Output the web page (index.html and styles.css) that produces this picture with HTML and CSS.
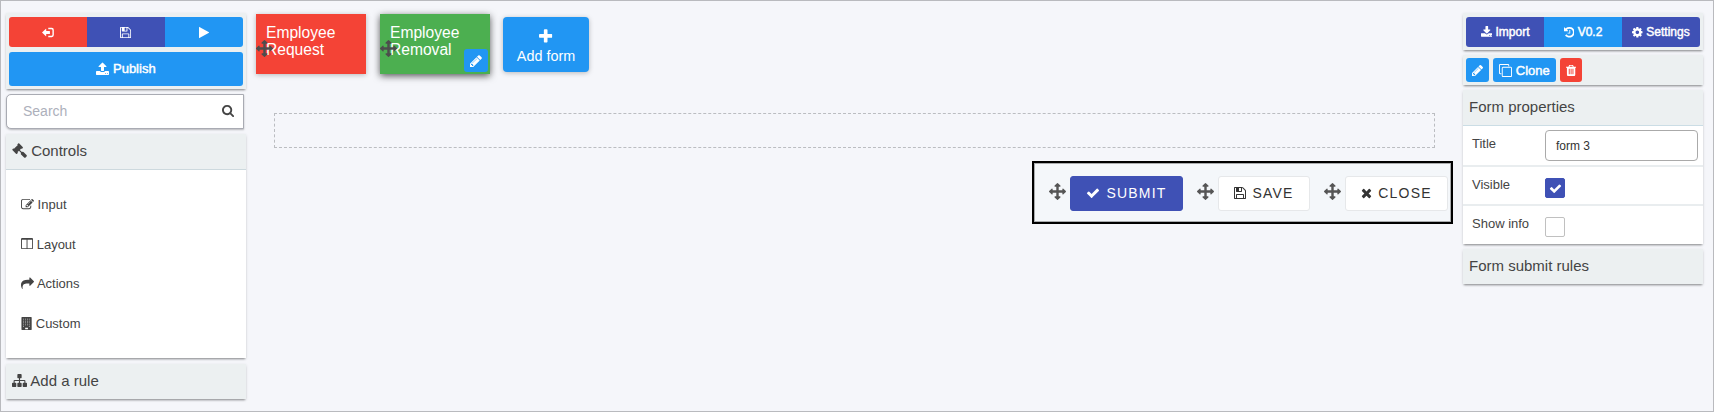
FILE: index.html
```html
<!DOCTYPE html>
<html lang="en">
<head>
<meta charset="utf-8">
<title>Form designer</title>
<link rel="stylesheet" href="styles.css">
</head>
<body>
<svg class="sprite" aria-hidden="true">
<symbol id="arrows" viewBox="0 0 1792 1792"><path d="M1792 896q0 26-19 45l-256 256q-19 19-45 19t-45-19-19-45v-128h-384v384h128q26 0 45 19t19 45-19 45l-256 256q-19 19-45 19t-45-19l-256-256q-19-19-19-45t19-45 45-19h128v-384h-384v128q0 26-19 45t-45 19-45-19l-256-256q-19-19-19-45t19-45l256-256q19-19 45-19t45 19 19 45v128h384v-384h-128q-26 0-45-19t-19-45 19-45l256-256q19-19 45-19t45 19l256 256q19 19 19 45t-19 45-45 19h-128v384h384v-128q0-26 19-45t45-19 45 19l256 256q19 19 19 45z"/></symbol>
<symbol id="check" viewBox="0 0 1792 1792"><path d="M1671 566q0 40-28 68l-724 724-136 136q-28 28-68 28t-68-28l-136-136-362-362q-28-28-28-68t28-68l136-136q28-28 68-28t68 28l294 295 656-657q28-28 68-28t68 28l136 136q28 28 28 68z"/></symbol>
<symbol id="times" viewBox="192 0 1408 1792"><path d="M1490 1322q0 40-28 68l-136 136q-28 28-68 28t-68-28l-294-294-294 294q-28 28-68 28t-68-28l-136-136q-28-28-28-68t28-68l294-294-294-294q-28-28-28-68t28-68l136-136q28-28 68-28t68 28l294 294 294-294q28-28 68-28t68 28l136 136q28 28 28 68t-28 68l-294 294 294 294q28 28 28 68z"/></symbol>
<symbol id="search" viewBox="64 0 1664 1792"><path d="M1216 832q0-185-131.500-316.500t-316.500-131.500-316.500 131.500-131.500 316.500 131.500 316.500 316.500 131.500 316.500-131.500 131.500-316.500zm512 832q0 52-38 90t-90 38q-54 0-90-38l-343-342q-179 124-399 124-143 0-273.500-55.500t-225-150-150-225-55.500-273.500 55.500-273.500 150-225 225-150 273.500-55.500 273.500 55.500 225 150 150 225 55.500 273.500q0 220-124 399l343 343q37 37 37 90z"/></symbol>
<symbol id="floppy" viewBox="128 0 1536 1792"><path d="M512 1536h768v-384h-768v384zm896 0h128v-896q0-14-10-38.500t-20-34.500l-281-281q-10-10-34-20t-39-10v416q0 40-28 68t-68 28h-576q-40 0-68-28t-28-68v-416h-128v1280h128v-416q0-40 28-68t68-28h832q40 0 68 28t28 68v416zm-384-928v-320q0-13-9.500-22.500t-22.500-9.500h-192q-13 0-22.500 9.500t-9.500 22.500v320q0 13 9.500 22.500t22.500 9.500h192q13 0 22.500-9.500t9.500-22.500zm640 32v928q0 40-28 68t-68 28h-1344q-40 0-68-28t-28-68v-1344q0-40 28-68t68-28h928q40 0 88 20t76 48l280 280q28 28 48 76t20 88z"/></symbol>
<symbol id="plus" viewBox="192 0 1408 1792"><path d="M1600 736v192q0 40-28 68t-68 28h-416v416q0 40-28 68t-68 28h-192q-40 0-68-28t-28-68v-416h-416q-40 0-68-28t-28-68v-192q0-40 28-68t68-28h416v-416q0-40 28-68t68-28h192q40 0 68 28t28 68v416h416q40 0 68 28t28 68z"/></symbol>
<symbol id="pencil" viewBox="128 0 1536 1792"><path d="M491 1536l91-91-235-235-91 91v107h128v128h107zm523-928q0-22-22-22-10 0-17 7l-542 542q-7 7-7 17 0 22 22 22 10 0 17-7l542-542q7-7 7-17zm-54-192l416 416-832 832h-416v-416zm683 96q0 53-37 90l-166 166-416-416 166-165q36-38 90-38 53 0 91 38l235 234q37 39 37 91z"/></symbol>
<symbol id="cog" viewBox="128 0 1536 1792"><path d="M1152 896q0-106-75-181t-181-75-181 75-75 181 75 181 181 75 181-75 75-181zm512-109v222q0 12-8 23t-20 13l-185 28q-19 54-39 91 35 50 107 138 10 12 10 25t-9 23q-27 37-99 108t-94 71q-12 0-26-9l-138-108q-44 23-91 38-16 136-29 186-7 28-36 28h-222q-14 0-24.500-8.500t-11.500-21.500l-28-184q-49-16-90-37l-141 107q-10 9-25 9-14 0-25-11-126-114-165-168-7-10-7-23 0-12 8-23 15-21 51-66.500t54-70.500q-27-50-41-99l-183-27q-13-2-21-12.500t-8-23.500v-222q0-12 8-23t19-13l186-28q14-46 39-92-40-57-107-138-10-12-10-24 0-10 9-23 26-36 98.500-107.500t94.500-71.500q13 0 26 10l138 107q44-23 91-38 16-136 29-186 7-28 36-28h222q14 0 24.500 8.500t11.500 21.500l28 184q49 16 90 37l142-107q9-9 24-9 13 0 25 10 129 119 165 170 7 8 7 22 0 12-8 23-15 21-51 66.500t-54 70.500q26 50 41 98l183 28q13 2 21 12.500t8 23.500z"/></symbol>
<symbol id="download" viewBox="64 0 1664 1792"><path d="M1344 1344q0-26-19-45t-45-19-45 19-19 45 19 45 45 19 45-19 19-45zm256 0q0-26-19-45t-45-19-45 19-19 45 19 45 45 19 45-19 19-45zm128-224v320q0 40-28 68t-68 28h-1472q-40 0-68-28t-28-68v-320q0-40 28-68t68-28h465l135 136q58 56 136 56t136-56l136-136h464q40 0 68 28t28 68zm-325-569q17 41-14 70l-448 448q-18 19-45 19t-45-19l-448-448q-31-29-14-70 17-39 59-39h256v-448q0-26 19-45t45-19h256q26 0 45 19t19 45v448h256q42 0 59 39z"/></symbol>
<symbol id="upload" viewBox="64 0 1664 1792"><path d="M1344 1472q0-26-19-45t-45-19-45 19-19 45 19 45 45 19 45-19 19-45zm256 0q0-26-19-45t-45-19-45 19-19 45 19 45 45 19 45-19 19-45zm128-224v320q0 40-28 68t-68 28h-1472q-40 0-68-28t-28-68v-320q0-40 28-68t68-28h427q21 56 70.500 92t110.500 36h256q61 0 110.500-36t70.500-92h427q40 0 68 28t28 68zm-325-648q-17 40-59 40h-256v448q0 26-19 45t-45 19h-256q-26 0-45-19t-19-45v-448h-256q-42 0-59-40-17-39 14-69l448-448q18-19 45-19t45 19l448 448q31 30 14 69z"/></symbol>
<symbol id="history" viewBox="128 0 1536 1792"><path d="M1664 896q0 156-61 298t-164 245-245 164-298 61q-172 0-327-72.500t-264-204.500q-7-10-6.500-22.500t8.500-20.500l137-138q10-9 25-9 16 2 23 12 73 95 179 147t225 52q104 0 198.500-40.500t163.500-109.500 109.500-163.500 40.500-198.500-40.500-198.500-109.500-163.500-163.500-109.500-198.500-40.500q-98 0-188 35.500t-160 101.500l137 138q31 30 14 69-17 40-59 40h-448q-26 0-45-19t-19-45v-448q0-42 40-59 39-17 69 14l130 129q107-101 244.500-156.500t284.500-55.500q156 0 298 61t245 164 164 245 61 298zm-640-288v448q0 14-9 23t-23 9h-320q-14 0-23-9t-9-23v-64q0-14 9-23t23-9h224v-352q0-14 9-23t23-9h64q14 0 23 9t9 23z"/></symbol>
<symbol id="share" viewBox="0 0 1792 1792"><path d="M1792 640q0 26-19 45l-512 512q-19 19-45 19t-45-19-19-45v-256h-224q-98 0-175.500 6t-154 21.500-133 42.500-105.500 69.500-80 101-48.500 138.500-17.500 181q0 55 5 123 0 6 2.500 23.500t2.500 26.500q0 15-8.500 25t-23.500 10q-16 0-28-17-7-9-13-22t-13.500-30-10.500-24q-127-285-127-451 0-199 53-333 162-403 875-403h224v-256q0-26 19-45t45-19 45 19l512 512q19 19 19 45z"/></symbol>
<symbol id="sitemap" viewBox="0 0 1792 1792"><path d="M1792 1248v320q0 40-28 68t-68 28h-320q-40 0-68-28t-28-68v-320q0-40 28-68t68-28h96v-192h-512v192h96q40 0 68 28t28 68v320q0 40-28 68t-68 28h-320q-40 0-68-28t-28-68v-320q0-40 28-68t68-28h96v-192h-512v192h96q40 0 68 28t28 68v320q0 40-28 68t-68 28h-320q-40 0-68-28t-28-68v-320q0-40 28-68t68-28h96v-192q0-52 38-90t90-38h512v-192h-96q-40 0-68-28t-28-68v-320q0-40 28-68t68-28h320q40 0 68 28t28 68v320q0 40-28 68t-68 28h-96v192h512q52 0 90 38t38 90v192h96q40 0 68 28t28 68z"/></symbol>
<symbol id="gavel" viewBox="0 0 1792 1792"><path d="M1771 1536q0 53-37 90l-107 108q-39 37-91 37-53 0-90-37l-363-364q-38-36-38-90 0-53 43-96l-256-256-126 126q-14 14-34 14t-34-14q2 2 12.500 12t12.500 13 10 11.500 10 13.500 6 13.500 5.500 16.500 1.500 18q0 38-28 68-3 3-16.500 18t-19 20.500-18.500 16.500-22 15.500-22 9-26 4.500q-40 0-68-28l-408-408q-28-28-28-68 0-13 4.500-26t9-22 15.500-22 16.500-18.500 20.500-19 18-16.500q30-28 68-28 10 0 18 1.500t16.500 5.500 13.500 6 13.500 10 11.500 10 13 12.500 12 12.500q-14-14-14-34t14-34l348-348q14-14 34-14t34 14q-2-2-12.500-12t-12.500-13-10-11.500-10-13.500-6-13.500-5.500-16.500-1.500-18q0-38 28-68 3-3 16.500-18t19-20.500 18.500-16.500 22-15.500 22-9 26-4.500q40 0 68 28l408 408q28 28 28 68 0 13-4.500 26t-9 22-15.500 22-16.500 18.500-20.500 19-18 16.500q-30 28-68 28-10 0-18-1.500t-16.500-5.500-13.500-6-13.500-10-11.500-10-13-12.500-12-12.500q14 14 14 34t-14 34l-126 126 256 256q43-43 96-43 52 0 91 37l363 363q37 39 37 91z"/></symbol>
<symbol id="edit" viewBox="0 0 1792 1792"><path d="M888 1184l116-116-152-152-116 116v56h96v96h56zm440-720q-16-16-33 1l-350 350q-17 17-1 33t33-1l350-350q17-17 1-33zm80 594v190q0 119-84.500 203.500t-203.500 84.500h-832q-119 0-203.500-84.500t-84.500-203.500v-832q0-119 84.500-203.500t203.500-84.500h832q63 0 117 25 15 7 18 23 3 17-9 29l-49 49q-14 14-32 8-23-6-45-6h-832q-66 0-113 47t-47 113v832q0 66 47 113t113 47h832q66 0 113-47t47-113v-126q0-13 9-22l64-64q15-15 35-7t20 29zm-96-738l288 288-672 672h-288v-288zm444 132l-92 92-288-288 92-92q28-28 68-28t68 28l152 152q28 28 28 68t-28 68z"/></symbol>
<symbol id="columns" viewBox="64 0 1664 1792"><path d="M224 1536h608v-1152h-640v1120q0 13 9.500 22.500t22.500 9.500zm1376-32v-1120h-640v1152h608q13 0 22.500-9.500t9.500-22.500zm128-1216v1216q0 66-47 113t-113 47h-1344q-66 0-113-47t-47-113v-1216q0-66 47-113t113-47h1344q66 0 113 47t47 113z"/></symbol>
<symbol id="trash" viewBox="192 0 1408 1792"><path d="M704 1376v-704q0-14-9-23t-23-9h-64q-14 0-23 9t-9 23v704q0 14 9 23t23 9h64q14 0 23-9t9-23zm256 0v-704q0-14-9-23t-23-9h-64q-14 0-23 9t-9 23v704q0 14 9 23t23 9h64q14 0 23-9t9-23zm256 0v-704q0-14-9-23t-23-9h-64q-14 0-23 9t-9 23v704q0 14 9 23t23 9h64q14 0 23-9t9-23zm-544-992h448l-48-117q-7-9-17-11h-317q-10 2-17 11zm928 32v64q0 14-9 23t-23 9h-96v948q0 83-47 143.500t-113 60.500h-832q-66 0-113-58.500t-47-141.500v-952h-96q-14 0-23-9t-9-23v-64q0-14 9-23t23-9h309l70-167q15-37 54-63t79-26h320q40 0 79 26t54 63l70 167h309q14 0 23 9t9 23z"/></symbol>
<symbol id="clone" viewBox="0 0 1792 1792"><path d="M1664 1632v-1088q0-13-9.500-22.500t-22.500-9.500h-1088q-13 0-22.500 9.500t-9.500 22.500v1088q0 13 9.500 22.500t22.500 9.500h1088q13 0 22.500-9.500t9.500-22.500zm128-1088v1088q0 66-47 113t-113 47h-1088q-66 0-113-47t-47-113v-1088q0-66 47-113t113-47h1088q66 0 113 47t47 113zm-384-384v160h-128v-160q0-13-9.500-22.500t-22.500-9.500h-1088q-13 0-22.500 9.500t-9.500 22.500v1088q0 13 9.500 22.500t22.500 9.500h160v128h-160q-66 0-113-47t-47-113v-1088q0-66 47-113t113-47h1088q66 0 113 47t47 113z"/></symbol>
<symbol id="building" viewBox="128 0 1408 1792"><path fill-rule="evenodd" d="M192 0h1280q64 0 64 64v1664q0 64-64 64h-1280q-64 0-64-64v-1664q0-64 64-64zM640 1472v224h384v-224zM384 256v96h96v-96zM640 256v96h96v-96zM896 256v96h96v-96zM1152 256v96h96v-96zM384 512v96h96v-96zM640 512v96h96v-96zM896 512v96h96v-96zM1152 512v96h96v-96zM384 768v96h96v-96zM640 768v96h96v-96zM896 768v96h96v-96zM1152 768v96h96v-96zM384 1024v96h96v-96zM640 1024v96h96v-96zM896 1024v96h96v-96zM1152 1024v96h96v-96zM384 1280v96h96v-96zM1152 1280v96h96v-96z"/></symbol>
<symbol id="play" viewBox="192 0 1408 1792"><path d="M1577 927l-1328 738q-23 13-39.500 3t-16.500-36v-1472q0-26 16.500-36t39.500 3l1328 738q23 13 23 31t-23 31z"/></symbol>
<symbol id="exit" viewBox="64 0 1664 1792"><path d="M64 896l540-520q40-36 40 24v272h448q64 0 64 64v320q0 64-64 64h-448v272q0 60-40 24zM928 256h480q288 0 288 288v704q0 288-288 288h-480v-192h440q136 0 136-136v-624q0-136-136-136h-440z"/></symbol>
</svg>
<div class="app">
  <aside class="panel left">
    <section class="card actions">
      <div class="group">
        <button class="btn red"><svg class="ico w-l"><use href="#exit"/></svg></button>
        <button class="btn indigo"><svg class="ico w-m"><use href="#floppy"/></svg></button>
        <button class="btn blue"><svg class="ico w-s"><use href="#play"/></svg></button>
      </div>
      <button class="btn blue publish"><svg class="ico w-l"><use href="#upload"/></svg>&nbsp;Publish</button>
    </section>
    <div class="search"><span>Search</span><svg class="ico w-l"><use href="#search"/></svg></div>
    <section class="card controls">
      <h2 class="head"><svg class="ico"><use href="#gavel"/></svg> Controls</h2>
      <ul class="list">
        <li><svg class="ico"><use href="#edit"/></svg> Input</li>
        <li><svg class="ico w-l"><use href="#columns"/></svg> Layout</li>
        <li><svg class="ico"><use href="#share"/></svg> Actions</li>
        <li><svg class="ico w-m"><use href="#building"/></svg> Custom</li>
      </ul>
    </section>
    <section class="card"><h2 class="head rule"><svg class="ico"><use href="#sitemap"/></svg> Add a rule</h2></section>
  </aside>

  <main class="stage">
    <div class="tiles">
      <div class="tile red"><svg class="ico move"><use href="#arrows"/></svg>Employee<br>Request</div>
      <div class="tile green"><svg class="ico move"><use href="#arrows"/></svg>Employee<br>Removal
        <span class="edit"><svg class="ico w-m"><use href="#pencil"/></svg></span></div>
      <button class="add"><svg class="ico w-s"><use href="#plus"/></svg>Add form</button>
    </div>
    <div class="drop"></div>
    <div class="footer">
      <svg class="ico grip"><use href="#arrows"/></svg>
      <button class="cta submit"><svg class="ico"><use href="#check"/></svg>SUBMIT</button>
      <svg class="ico grip"><use href="#arrows"/></svg>
      <button class="cta save"><svg class="ico w-m"><use href="#floppy"/></svg>SAVE</button>
      <svg class="ico grip"><use href="#arrows"/></svg>
      <button class="cta close"><svg class="ico w-s"><use href="#times"/></svg>CLOSE</button>
    </div>
  </main>

  <aside class="panel right">
    <section class="card actions top">
      <div class="group">
        <button class="btn indigo"><svg class="ico w-l"><use href="#download"/></svg>&nbsp;Import</button>
        <button class="btn blue"><svg class="ico w-m"><use href="#history"/></svg>&nbsp;V0.2</button>
        <button class="btn indigo"><svg class="ico w-m"><use href="#cog"/></svg>&nbsp;Settings</button>
      </div>
    </section>
    <section class="card tools">
      <button class="btn blue t-edit"><svg class="ico w-m"><use href="#pencil"/></svg></button>
      <button class="btn blue t-clone"><svg class="ico"><use href="#clone"/></svg>&nbsp;Clone</button>
      <button class="btn red t-del"><svg class="ico w-s"><use href="#trash"/></svg></button>
    </section>
    <section class="card props">
      <h2 class="head">Form properties</h2>
      <div class="row"><label>Title</label><div class="field">form 3</div></div>
      <div class="row"><label>Visible</label><span class="box on"><svg class="ico"><use href="#check"/></svg></span></div>
      <div class="row"><label>Show info</label><span class="box"></span></div>
    </section>
    <section class="card"><h2 class="head">Form submit rules</h2></section>
  </aside>
</div>
</body>
</html>
```
FILE: styles.css
```css
* { box-sizing: border-box; }
body { margin: 0; font-family: "Liberation Sans", Arial, sans-serif; color: #444; }
button { border: 0; padding: 0; font: inherit; color: inherit; }
.sprite { position: absolute; width: 0; height: 0; }

.app {
  width: 1714px; height: 412px;
  display: flex;
  background: #f5f6fa;
  border: 1px solid #b9babe;
}

/* icons are sized in em, like glyphs of an icon font */
.ico { width: 1em; height: 1em; flex: none; fill: currentColor; vertical-align: -0.143em; }
.w-l { width: 0.929em; }
.w-m { width: 0.857em; }
.w-s { width: 0.786em; }

.red { background: #f44336; }
.blue { background: #2196f3; }
.indigo { background: #3f51b5; }
.green { background: #4caf50; }

.panel { width: 240px; flex: none; display: flex; flex-direction: column; padding-top: 12px; }
.left { margin-left: 5px; }
.card {
  background: #ecf0f1;
  box-shadow: 0 2px 2px -1px rgba(0, 0, 0, .38), 0 1px 3px rgba(0, 0, 0, .12);
}
.head {
  margin: 0; height: 35px; padding-left: 6px;
  font-size: 15px; font-weight: 400; line-height: 33px;
}

.btn {
  display: flex; align-items: center; justify-content: center;
  color: #fff; font-size: 13px; -webkit-text-stroke: .45px #fff; border-radius: 3px;
}
.group { display: flex; height: 30px; border-radius: 3px; overflow: hidden; }
.group .btn { flex: 1; border-radius: 0; font-size: 12px; }
.group .ico { font-size: 12.500px; }
.left .group .ico { font-size: 13px; }

.actions { padding: 4px 3px 3px; }
.publish { width: 100%; height: 34px; margin-top: 5px; padding-bottom: 1px; }
.publish .ico { font-size: 14px; }

.search {
  height: 35px; width: 238px; margin-top: 5px; padding: 0 9px 2px 16px;
  display: flex; align-items: center; justify-content: space-between;
  background: #fff; border: 1px solid #a9abb3; border-radius: 5px 0 0 5px;
  box-shadow: 0 1px 2px rgba(0, 0, 0, .25);
  font-size: 14px; color: #adb0bb;
}
.search .ico { font-size: 13px; color: #444; }

.controls { margin-top: 5px; margin-bottom: 6px; }
.controls .head { height: 36px; border-bottom: 1px solid #cdd9de; line-height: 34px; }
.list {
  height: 188px; margin: 0; padding: 15px 0 0 15px;
  list-style: none; background: #fff; font-size: 13px;
}
.list li { height: 39.600px; line-height: 39.600px; }

.stage { width: 1217px; flex: none; padding: 13px 10px 0 10px; display: flex; flex-direction: column; }
.tiles { display: flex; height: 60px; }
.tile {
  position: relative;
  width: 110px; height: 60px; margin-right: 14px; padding: 10px 0 0 10px;
  color: #fff; font-size: 15.600px; line-height: 17px;
  box-shadow: 0 1px 5px rgba(0, 0, 0, .25);
}
.tile.green { box-shadow: 0 2px 7px rgba(0, 0, 0, .65); }
.move { position: absolute; left: 0; top: 26px; font-size: 17px; color: #4d4d4d; }
.edit {
  position: absolute; right: 2px; bottom: 2px; width: 24px; height: 23px;
  display: flex; align-items: center; justify-content: center;
  background: #2196f3; border-radius: 3px; font-size: 14px;
}
.add {
  width: 86px; height: 55px; margin: 3px 0 0 -1px; padding-top: 3px;
  display: flex; flex-direction: column; align-items: center; justify-content: center; gap: 3px;
  background: #2196f3; color: #fff; border-radius: 4px; font-size: 14.400px;
  box-shadow: 0 1px 5px rgba(0, 0, 0, .25);
}
.add .ico { font-size: 17px; }

.drop { width: 1161px; height: 35px; margin: 39px 0 0 18px; border: 1px dashed #bbbdc1; }
.footer {
  width: 421px; height: 63px; margin: 13px 0 0 auto; padding: 1px 3px 0 15px;
  display: flex; align-items: center;
  border: 2px solid #000; background: #f4f7fa;
  box-shadow: inset 0 0 0 1px rgba(0, 0, 0, .3);
}
.grip { font-size: 17px; color: #555; margin: 0 4px 4px 0; }
.cta {
  height: 35px; display: flex; align-items: center; justify-content: center; gap: 6px;
  background: #fff; color: #333; border: 1px solid #e6e8ea; border-radius: 3px;
  font-size: 14px; letter-spacing: 1.200px;
}
.submit { width: 113px; margin-right: 14px; background: #3f51b5; border-color: #3f51b5; color: #fff; }
.save { width: 92px; margin-right: 14px; }
.close { width: 103px; }

.top { height: 37px; padding-bottom: 3px; }
.tools { height: 30px; margin-top: 5px; padding: 3px; display: flex; gap: 4px; }
.tools .btn { height: 24px; }
.tools .ico { font-size: 13px; }
.t-edit { width: 23px; }
.t-clone { width: 63px; }
.t-del { width: 22px; }
.props { margin: 5px 0; }
.props .head { height: 36px; border-bottom: 1px solid #cbdde5; }
.row {
  height: 39px; padding: 0 5px 0 9px; display: flex; font-size: 13px;
  background: #fff; border-bottom: 2px solid #e9edef;
}
.row:nth-child(2) { height: 41px; }
.row:last-child { height: 38px; border-bottom: 0; }
.row label { width: 73px; line-height: 38px; margin-top: -1px; }
.field {
  width: 153px; height: 31px; margin-top: 4px; padding-left: 10px;
  border: 1px solid #aaa; border-radius: 4px;
  font-size: 12px; line-height: 30px; color: #333;
}
.box { width: 20px; height: 20px; margin-top: 11px; border: 1px solid #c0c0c0; border-radius: 2px; }
.box.on {
  display: flex; align-items: center; justify-content: center;
  background: #3f51b5; border-color: #3f51b5; color: #fff;
}
```
